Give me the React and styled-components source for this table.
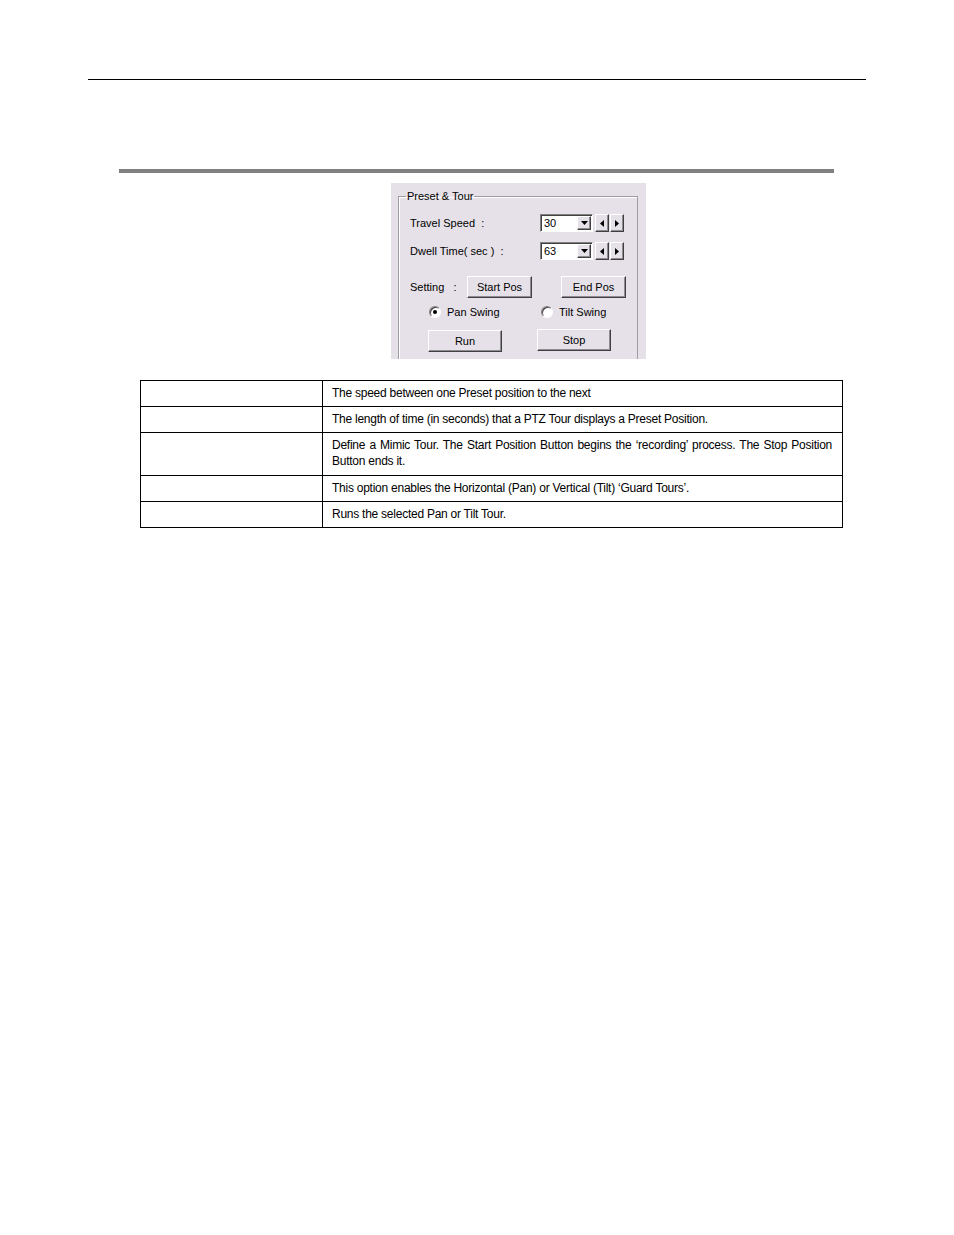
import React from "react";
import styled, { createGlobalStyle } from "styled-components";

const Global = createGlobalStyle`
  html, body { margin: 0; padding: 0; background: #ffffff; }
  body { font-family: "Liberation Sans", Arial, sans-serif; }
`;

const Page = styled.div`
  width: 954px;
  min-height: 1235px;
  padding-top: 79px;
  box-sizing: border-box;
`;

const HeaderRule = styled.div`
  margin-left: 88px;
  width: 778px;
  height: 1px;
  background: #000;
`;

const SectionBar = styled.div`
  margin-top: 89px;
  margin-left: 119px;
  width: 715px;
  height: 4px;
  background: #808080;
`;

const Panel = styled.div`
  margin-top: 10px;
  margin-left: 391px;
  width: 255px;
  height: 176px;
  box-sizing: border-box;
  padding: 7px 8px 0 7px;
  background: #e6e1e8;
  overflow: hidden;
  font-family: "Liberation Sans", Arial, sans-serif;
  font-size: 11px;
  color: #000;
`;

const Group = styled.fieldset`
  margin: 0;
  height: 200px;
  padding: 0 0 0 11px;
  border: 1px solid #a09ca3;
  border-bottom: none;
  box-shadow: inset 1px 1px 0 #ffffff;
`;

const Legend = styled.legend`
  padding: 0 1px;
  margin-left: -4px;
  line-height: 12px;
  font-size: 11px;
`;

const FieldRow = styled.div`
  display: flex;
  align-items: center;
  height: 18px;
  margin-top: ${(p) => p.$mt}px;
`;

const Label = styled.span`
  width: ${(p) => p.$w}px;
  white-space: pre;
`;

const Combo = styled.div`
  width: 53px;
  height: 18px;
  box-sizing: border-box;
  background: #fff;
  border-top: 1px solid #808080;
  border-left: 1px solid #808080;
  border-right: 1px solid #ffffff;
  border-bottom: 1px solid #ffffff;
  box-shadow: inset 1px 1px 0 #404040;
  display: flex;
  align-items: center;
  padding: 1px 1px 1px 3px;
`;

const ComboText = styled.span`
  flex: 1;
  font-size: 11px;
  line-height: 14px;
`;

const Raised = styled.div`
  box-sizing: border-box;
  background: #e6e1e8;
  border-top: 1px solid #ffffff;
  border-left: 1px solid #ffffff;
  border-right: 1px solid #404040;
  border-bottom: 1px solid #404040;
  box-shadow: inset -1px -1px 0 #8f8b92;
  display: flex;
  align-items: center;
  justify-content: center;
`;

const DropBtn = styled(Raised)`
  width: 14px;
  height: 14px;
`;

const ArrowBtn = styled(Raised)`
  width: 14px;
  height: 18px;
  margin-left: ${(p) => p.$ml}px;
`;

const Button = styled(Raised)`
  width: ${(p) => p.$w}px;
  height: 22px;
  margin-left: ${(p) => p.$ml}px;
  margin-top: ${(p) => p.$mt || 0}px;
  font-size: 11px;
`;

const Row = styled.div`
  display: flex;
  align-items: ${(p) => p.$align || "center"};
  margin-top: ${(p) => p.$mt}px;
  height: ${(p) => p.$h}px;
`;

const Radio = styled.span`
  display: inline-block;
  box-sizing: border-box;
  width: 12px;
  height: 12px;
  border-radius: 50%;
  background: #fff;
  border: 1px solid;
  border-color: #808080 #ffffff #ffffff #808080;
  box-shadow: inset 1px 1px 0 #404040;
  position: relative;
  margin-left: ${(p) => p.$ml}px;
  margin-right: 6px;
  &::after {
    content: "";
    display: ${(p) => (p.$checked ? "block" : "none")};
    position: absolute;
    left: 3px;
    top: 3px;
    width: 4px;
    height: 4px;
    border-radius: 50%;
    background: #000;
  }
`;

const RadioLabel = styled.span`
  width: ${(p) => p.$w}px;
`;

const Tri = ({ dir }) => {
  const pts =
    dir === "down"
      ? "0,0 7,0 3.5,4"
      : dir === "left"
      ? "4,0 4,7 0,3.5"
      : "0,0 0,7 4,3.5";
  const w = dir === "down" ? 7 : 4;
  const h = dir === "down" ? 4 : 7;
  return (
    <svg width={w} height={h} viewBox={`0 0 ${w} ${h}`}>
      <polygon points={pts} fill="#000" />
    </svg>
  );
};

const Table = styled.table`
  margin-top: 21px;
  margin-left: 140px;
  width: 703px;
  border-collapse: collapse;
  font-family: "Liberation Sans", Arial, sans-serif;
  font-size: 12px;
  letter-spacing: -0.25px;
  color: #000;
`;

const Td = styled.td`
  border: 1px solid #000;
  padding: 4px 10px ${(p) => (p.$tall ? 6 : 5)}px 9px;
  line-height: 16px;
  vertical-align: top;
  text-align: justify;
  width: ${(p) => (p.$first ? "162px" : "auto")};
`;

const rows = [
  "The speed between one Preset position to the next",
  "The length of time (in seconds) that a PTZ Tour displays a Preset Position.",
  "Define a Mimic Tour. The Start Position Button begins the \u2018recording\u2019 process. The Stop Position Button ends it.",
  "This option enables the Horizontal (Pan) or Vertical (Tilt) \u2018Guard Tours\u2019.",
  "Runs the selected Pan or Tilt Tour.",
];

export default function App() {
  return (
    <Page>
      <Global />
      <HeaderRule />
      <SectionBar />
      <Panel>
        <Group>
          <Legend>Preset &amp; Tour</Legend>
          <FieldRow $mt={12}>
            <Label $w={130}>{"Travel Speed  :"}</Label>
            <Combo>
              <ComboText>30</ComboText>
              <DropBtn><Tri dir="down" /></DropBtn>
            </Combo>
            <ArrowBtn $ml={2}><Tri dir="left" /></ArrowBtn>
            <ArrowBtn $ml={1}><Tri dir="right" /></ArrowBtn>
          </FieldRow>
          <FieldRow $mt={10}>
            <Label $w={130}>{"Dwell Time( sec )  :"}</Label>
            <Combo>
              <ComboText>63</ComboText>
              <DropBtn><Tri dir="down" /></DropBtn>
            </Combo>
            <ArrowBtn $ml={2}><Tri dir="left" /></ArrowBtn>
            <ArrowBtn $ml={1}><Tri dir="right" /></ArrowBtn>
          </FieldRow>
          <Row $mt={16} $h={23} $align="flex-start">
            <Label $w={57} style={{ marginTop: 5 }}>{"Setting   :"}</Label>
            <Button $w={65} $ml={0}>Start Pos</Button>
            <Button $w={65} $ml={29} $mt={0}>End Pos</Button>
          </Row>
          <Row $mt={6} $h={14}>
            <Radio $ml={19} $checked />
            <RadioLabel $w={94}>Pan Swing</RadioLabel>
            <Radio $ml={0} />
            <RadioLabel $w={60}>Tilt Swing</RadioLabel>
          </Row>
          <Row $mt={10} $h={23} $align="flex-start">
            <Button $w={74} $ml={18} $mt={1}>Run</Button>
            <Button $w={74} $ml={35}>Stop</Button>
          </Row>
        </Group>
      </Panel>
      <Table>
        <tbody>
          {rows.map((r, i) => (
            <tr key={i}>
              <Td $first />
              <Td $tall={i === 2}>{r}</Td>
            </tr>
          ))}
        </tbody>
      </Table>
    </Page>
  );
}
